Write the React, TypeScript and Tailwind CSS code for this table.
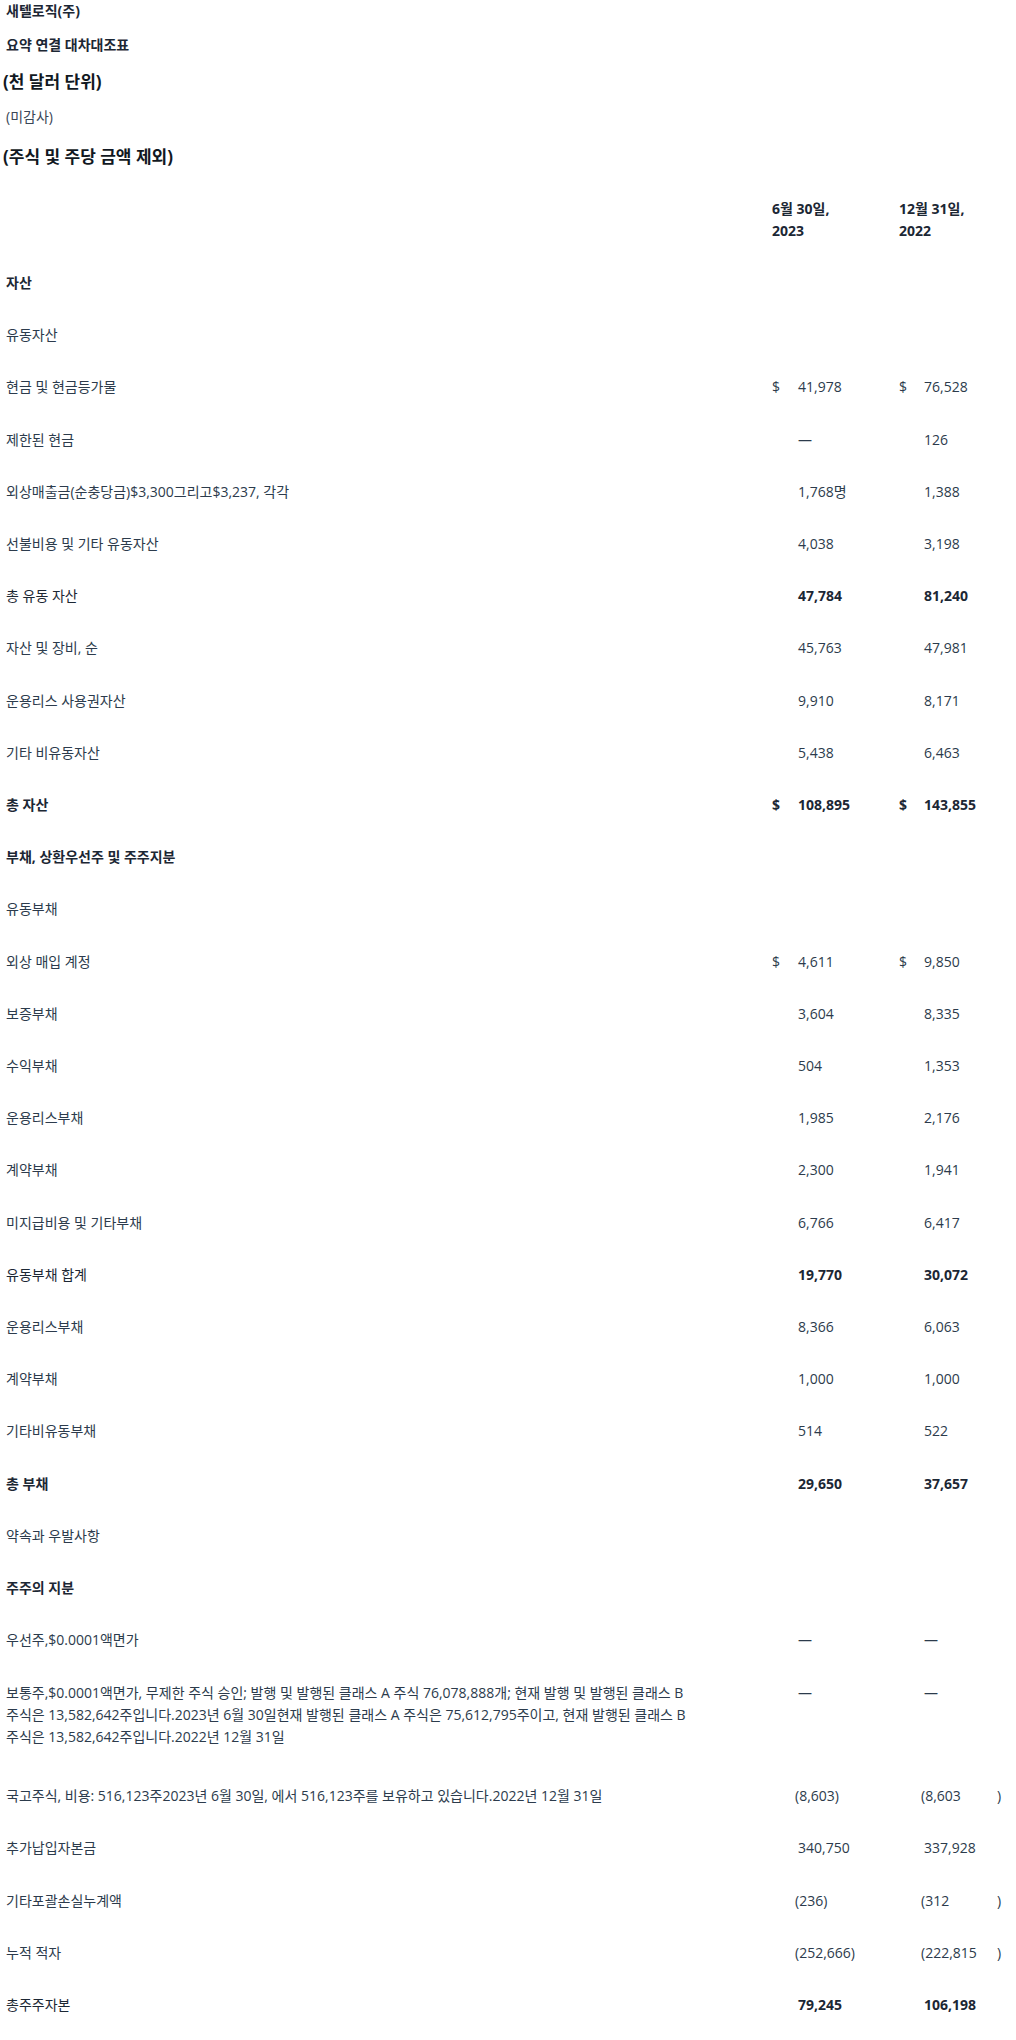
import React from 'react';

type Row = {
  label: string;
  bold?: boolean;
  boldLabel?: boolean;
  dollar?: boolean;
  a?: string;
  b?: string;
  close?: boolean;
  neg?: boolean;
  extraPad?: boolean;
};

const rows: Row[] = [
  { label: '자산', boldLabel: true },
  { label: '유동자산' },
  { label: '현금 및 현금등가물', dollar: true, a: '41,978', b: '76,528' },
  { label: '제한된 현금', a: '—', b: '126' },
  { label: '외상매출금(순충당금)$3,300그리고$3,237, 각각', a: '1,768명', b: '1,388' },
  { label: '선불비용 및 기타 유동자산', a: '4,038', b: '3,198' },
  { label: '총 유동 자산', bold: true, a: '47,784', b: '81,240' },
  { label: '자산 및 장비, 순', a: '45,763', b: '47,981' },
  { label: '운용리스 사용권자산', a: '9,910', b: '8,171' },
  { label: '기타 비유동자산', a: '5,438', b: '6,463' },
  { label: '총 자산', bold: true, boldLabel: true, dollar: true, a: '108,895', b: '143,855' },
  { label: '부채, 상환우선주 및 주주지분', boldLabel: true },
  { label: '유동부채' },
  { label: '외상 매입 계정', dollar: true, a: '4,611', b: '9,850' },
  { label: '보증부채', a: '3,604', b: '8,335' },
  { label: '수익부채', a: '504', b: '1,353' },
  { label: '운용리스부채', a: '1,985', b: '2,176' },
  { label: '계약부채', a: '2,300', b: '1,941' },
  { label: '미지급비용 및 기타부채', a: '6,766', b: '6,417' },
  { label: '유동부채 합계', bold: true, a: '19,770', b: '30,072' },
  { label: '운용리스부채', a: '8,366', b: '6,063' },
  { label: '계약부채', a: '1,000', b: '1,000' },
  { label: '기타비유동부채', a: '514', b: '522' },
  { label: '총 부채', bold: true, boldLabel: true, a: '29,650', b: '37,657' },
  { label: '약속과 우발사항' },
  { label: '주주의 지분', boldLabel: true },
  { label: '우선주,$0.0001액면가', a: '—', b: '—' },
  {
    label:
      '보통주,$0.0001액면가, 무제한 주식 승인; 발행 및 발행된 클래스 A 주식 76,078,888개; 현재 발행 및 발행된 클래스 B 주식은 13,582,642주입니다.2023년 6월 30일현재 발행된 클래스 A 주식은 75,612,795주이고, 현재 발행된 클래스 B 주식은 13,582,642주입니다.2022년 12월 31일',
    a: '—',
    b: '—',
    extraPad: true,
  },
  { label: '국고주식, 비용: 516,123주2023년 6월 30일, 에서 516,123주를 보유하고 있습니다.2022년 12월 31일', a: '(8,603)', b: '(8,603', close: true, neg: true },
  { label: '추가납입자본금', a: '340,750', b: '337,928' },
  { label: '기타포괄손실누계액', a: '(236)', b: '(312', close: true, neg: true },
  { label: '누적 적자', a: '(252,666)', b: '(222,815', close: true, neg: true },
  { label: '총주주자본', bold: true, a: '79,245', b: '106,198' },
];

const grid = 'grid grid-cols-[772px_26px_101px_25px_73px_19px]';

export default function App() {
  return (
    <div
      className="w-[1016px] bg-white text-[14px] leading-[22.2px] text-[#2c3b4c]"
      style={{ fontFamily: '"Open Sans", "Noto Sans CJK KR", sans-serif' }}
    >
      <div className="pl-[6px] font-bold text-[#1c2734]">새텔로직(주)</div>
      <div className="mt-[12px] pl-[6px] font-bold text-[#1c2734]">요약 연결 대차대조표</div>
      <div className="mt-[13px] pl-[3px] text-[17px] leading-[26px] font-bold text-[#111822]">(천 달러 단위)</div>
      <div className="mt-[11px] pl-[6px] text-[#3a4656]">(미감사)</div>
      <div className="mt-[15px] pl-[3px] text-[17px] leading-[26px] font-bold text-[#111822]">(주식 및 주당 금액 제외)</div>

      <div className={`${grid} mt-[13px] py-[15px] font-bold text-[#1c2734]`}>
        <div />
        <div className="col-span-2">
          6월 30일,
          <br />
          2023
        </div>
        <div className="col-span-3">
          12월 31일,
          <br />
          2022
        </div>
      </div>

      {rows.map((r, i) => (
        <div
          key={i}
          className={`${grid} pt-[15px] ${r.extraPad ? 'pb-[22px]' : 'pb-[15px]'} ${r.bold ? 'font-bold text-[#1c2734]' : ''}`}
        >
          <div className={`pl-[6px] pr-[60px] break-keep ${r.boldLabel ? 'font-bold text-[#1c2734]' : 'font-normal'}`}>{r.label}</div>
          <div>{r.dollar ? '$' : ''}</div>
          <div className={r.neg ? '-ml-[3px]' : ''}>{r.a ?? ''}</div>
          <div>{r.dollar ? '$' : ''}</div>
          <div className={r.neg ? '-ml-[3px]' : ''}>{r.b ?? ''}</div>
          <div>{r.close ? ')' : ''}</div>
        </div>
      ))}
    </div>
  );
}
